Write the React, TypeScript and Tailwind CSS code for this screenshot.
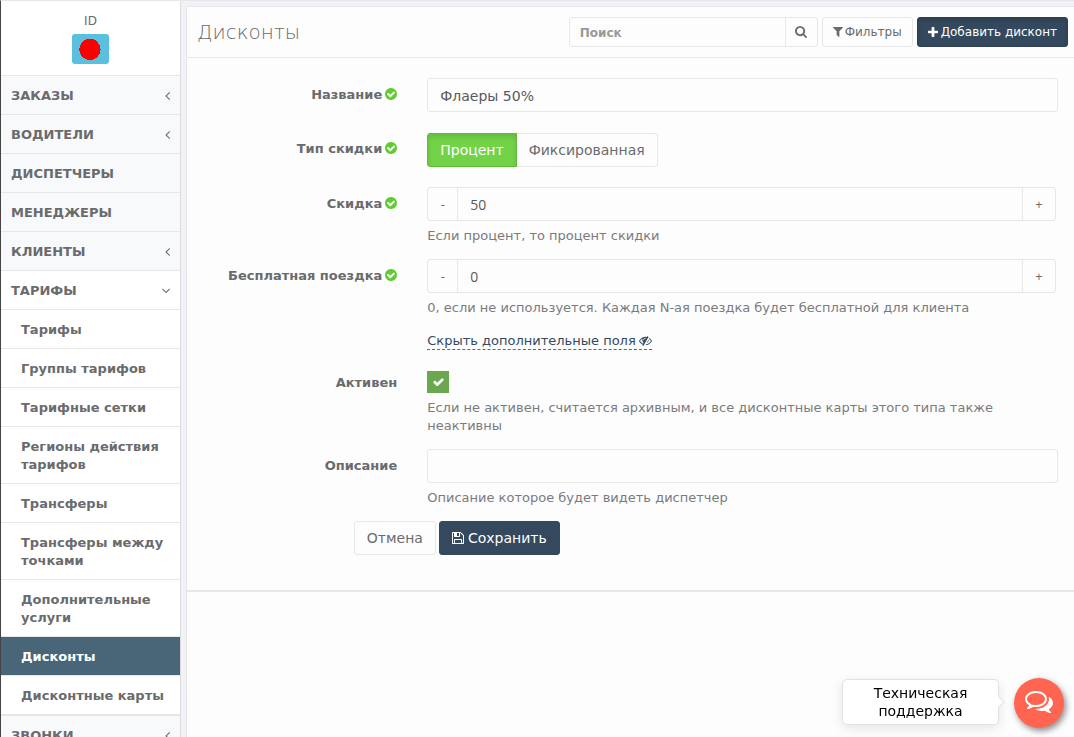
import React, { useState } from 'react';

type IconProps = { d: string; box?: string; className?: string };

const Icon: React.FC<IconProps> = ({ d, box = '128 128 1536 1536', className }) => (
  <svg viewBox={box} fill="currentColor" className={className} aria-hidden="true">
    <path d={d} />
  </svg>
);

const paths = {
  checkCircle:
    'M1412 734q0-28-18-46l-91-90q-19-19-45-19t-45 19l-408 407-226-226q-19-19-45-19t-45 19l-91 90q-18 18-18 46 0 27 18 45l362 362q19 19 45 19 27 0 46-19l543-543q18-18 18-45zm252 162q0 209-103 385.5t-279.5 279.5-385.5 103-385.5-103-279.5-279.5-103-385.5 103-385.5 279.5-279.5 385.5-103 385.5 103 279.5 279.5 103 385.5z',
  search:
    'M1216 832q0-185-131.5-316.5t-316.5-131.5-316.5 131.5-131.5 316.5 131.5 316.5 316.5 131.5 316.5-131.5 131.5-316.5zm512 832q0 52-38 90t-90 38q-54 0-90-38l-343-342q-179 124-399 124-143 0-273.5-55.5t-225-150-150-225-55.5-273.5 55.5-273.5 150-225 225-150 273.5-55.5 273.5 55.5 225 150 150 225 55.5 273.5q0 220-124 399l343 343q37 37 37 90z',
  filter:
    'M1595 295q17 41-14 70l-493 493v742q0 42-39 59-13 5-25 5-27 0-45-19l-256-256q-19-19-19-45v-486l-493-493q-31-29-14-70 17-39 59-39h1280q42 0 59 39z',
  plus: 'M1600 736v192q0 40-28 68t-68 28h-416v416q0 40-28 68t-68 28h-192q-40 0-68-28t-28-68v-416h-416q-40 0-68-28t-28-68v-192q0-40 28-68t68-28h416v-416q0-40 28-68t68-28h192q40 0 68 28t28 68v416h416q40 0 68 28t28 68z',
  floppy:
    'M512 1536h768v-384h-768v384zm896 0h128v-896q0-14-10-38.5t-20-34.5l-281-281q-10-10-34-20t-39-10v416q0 40-28 68t-68 28h-576q-40 0-68-28t-28-68v-416h-128v1280h128v-416q0-40 28-68t68-28h832q40 0 68 28t28 68v416zm-384-928v-320q0-13-9.5-22.5t-22.5-9.5h-192q-13 0-22.5 9.5t-9.5 22.5v320q0 13 9.5 22.5t22.5 9.5h192q13 0 22.5-9.5t9.5-22.5zm640 32v928q0 40-28 68t-68 28h-1344q-40 0-68-28t-28-68v-1344q0-40 28-68t68-28h928q40 0 88 20t76 48l280 280q28 28 48 76t20 88z',
  check:
    'M1671 566q0 40-28 68l-724 724-136 136q-28 28-68 28t-68-28l-136-136-362-362q-28-28-28-68t28-68l136-136q28-28 68-28t68 28l294 295 656-657q28-28 68-28t68 28l136 136q28 28 28 68z',
  angleLeft:
    'M1203 544q0 13-10 23l-393 393 393 393q10 10 10 23t-10 23l-50 50q-10 10-23 10t-23-10l-466-466q-10-10-10-23t10-23l466-466q10-10 23-10t23 10l50 50q10 10 10 23z',
  angleDown:
    'M1395 736q0 13-10 23l-466 466q-10 10-23 10t-23-10l-466-466q-10-10-10-23t10-23l50-50q10-10 23-10t23 10l393 393 393-393q10-10 23-10t23 10l50 50q10 10 10 23z',
  comments:
    'M704 384q-153 0-286 52t-211.5 141-78.5 191q0 82 53 158t149 132l97 56-35 84q34-20 62-39l44-31 53 10q78 14 153 14 153 0 286-52t211.5-141 78.5-191-78.5-191-211.5-141-286-52zm0-128q191 0 353.5 68.5t256.5 186.5 94 257-94 257-256.5 186.5-353.5 68.5q-86 0-176-16-124 88-278 128-36 9-86 16h-3q-11 0-20.5-8t-11.5-21q-1-3-1-6.5t.5-6.5 2-6l2.5-5 3.5-5.5 4-5 4.5-5 4-4.5q5-6 23-25t26-29.5 22.5-29 25-38.5 20.5-44q-124-72-195-177t-71-224q0-139 94-257t256.5-186.5 353.5-68.5zm822 1169q10 24 20.5 44t25 38.5 22.5 29 26 29.5 23 25q1 1 4 4.5t4.5 5 4 5 3.5 5.5l2.5 5 2 6 .5 6.5-1 6.5q-3 14-13 22t-22 7q-50-7-86-16-154-40-278-128-90 16-176 16-271 0-472-132 58 4 88 4 161 0 309-45t264-129q125-92 192-212t67-254q0-77-23-152 129 71 204 178t75 230q0 120-71 224.5t-195 176.5z',
  eyeSlash:
    'M555 1335l78-141q-87-63-136-159t-49-203q0-121 61-225-229 117-381 353 167 258 427 375zm389-759q0-20-14-34t-34-14q-125 0-214.5 89.5t-89.5 214.5q0 20 14 34t34 14 34-14 14-34q0-86 61-147t147-61q20 0 34-14t14-34zm363-191q0 7-1 9-105 188-315 566t-316 567l-49 89q-10 16-28 16-12 0-134-70-16-10-16-28 0-12 44-87-143-65-263.5-173t-208.5-245q-20-31-20-69t20-69q153-235 380-371t496-136q89 0 180 17l54-97q10-16 28-16 5 0 18 6t31 15.5 33 18.5 31.5 18.5 19.5 11.5q16 10 16 27zm37 447q0 139-79 253.5t-209 164.5l280-502q8 45 8 84zm448 128q0 35-20 69-39 64-109 145-150 172-347.5 267t-419.5 95l74-132q212-18 392.5-137t301.5-307q-115-179-282-294l63-112q95 64 182.5 153t144.5 184q20 34 20 69z',
};

const topMenu = [
  { title: 'Заказы', nested: true },
  { title: 'Водители', nested: true },
  { title: 'Диспетчеры', nested: false },
  { title: 'Менеджеры', nested: false },
  { title: 'Клиенты', nested: true },
];

const tariffMenu = [
  'Тарифы',
  'Группы тарифов',
  'Тарифные сетки',
  'Регионы действия тарифов',
  'Трансферы',
  'Трансферы между точками',
  'Дополнительные услуги',
  'Дисконты',
  'Дисконтные карты',
];

const MenuLink: React.FC<{ title: string; nested?: boolean; open?: boolean }> = ({ title, nested, open }) => (
  <a
    href="#"
    className={`flex items-center justify-between border-b border-[#e7e7e7] px-2.5 pt-[11px] pb-[9px] text-[13px] leading-[18px] font-bold uppercase ${open ? 'bg-white' : 'bg-[#f8f9fb]'}`}
  >
    {title}
    {open && <Icon d={paths.angleDown} box="384 448 1024 1024" className="h-2 w-2" />}
    {nested && <Icon d={paths.angleLeft} box="563 448 640 1024" className="h-2 w-[5px]" />}
  </a>
);

const Sidebar: React.FC = () => (
  <aside className="w-[180px] shrink-0 border-r border-[#dcdcdc] bg-white">
    <div className="flex h-[75px] flex-col items-center border-b border-[#e7e7e7] pt-[11px] text-[12px] leading-[18px]">
      ID
      <button type="button" aria-label="ID" className="mt-1 flex h-[30px] w-[37px] items-center justify-center rounded-[3px] bg-[#5bc0de]">
        <svg viewBox="0 0 24 24" className="mr-0.5 h-6 w-6" shapeRendering="crispEdges">
          <circle cx="12" cy="12.5" r="10.6" fill="#f00" />
        </svg>
      </button>
    </div>
    <nav>
      {topMenu.map((item) => (
        <MenuLink key={item.title} {...item} />
      ))}
      <MenuLink title="Тарифы" open />
      <ul className="border-b border-[#e7e7e7]">
        {tariffMenu.map((title) => (
          <li key={title}>
            <a
              href="#"
              className={`block border-b border-[#e7e7e7] pt-[11px] pr-2.5 pb-[9px] pl-5 text-[13px] leading-[18px] font-bold ${title === 'Дисконты' ? 'bg-[#486677] text-white' : ''}`}
            >
              {title}
            </a>
          </li>
        ))}
      </ul>
      <MenuLink title="Звонки" nested />
    </nav>
  </aside>
);

type FieldProps = {
  label: string;
  id: string;
  valid?: boolean;
  help?: string;
  className?: string;
  labelClass?: string;
  children: React.ReactNode;
};

const Field: React.FC<FieldProps> = ({ label, id, valid, help, className = 'mb-3.5', labelClass = 'pt-2', children }) => (
  <div className={`grid grid-cols-4 ${className}`}>
    <label htmlFor={id} className={`flex items-center justify-end gap-[3px] self-start px-[15px] text-[13px] leading-[18px] font-bold ${labelClass}`}>
      {label}
      {valid && <Icon d={paths.checkCircle} className="mb-0.5 h-3 w-3 text-[#60cc30]" />}
    </label>
    <div className="col-span-3 px-[15px]">
      {children}
      {help && <p className="mt-1.5 text-[13px] leading-[18px] text-[#7a7b7d]">{help}</p>}
    </div>
  </div>
);

const Stepper: React.FC<{ id: string; initial: number }> = ({ id, initial }) => {
  const [value, setValue] = useState(initial);
  return (
    <div className="mr-0.5 flex h-[34px] rounded-[3px] border border-[#e7e7e7] font-['Open_Sans',sans-serif]">
      <button type="button" onClick={() => setValue(value - 1)} className="w-[30px] border-r border-[#e7e7e7] text-[13px]">
        -
      </button>
      <input
        id={id}
        value={value}
        inputMode="numeric"
        onChange={(e) => setValue(Number(e.target.value) || 0)}
        className="min-w-0 flex-1 px-3 pt-0.5 text-sm text-[#58595b] outline-none"
      />
      <button type="button" onClick={() => setValue(value + 1)} className="w-[33px] border-l border-[#e7e7e7] text-[13px]">
        +
      </button>
    </div>
  );
};

const App: React.FC = () => {
  const [kind, setKind] = useState('percent');
  const [active, setActive] = useState(true);

  return (
    <div className="flex h-screen overflow-hidden border-t border-l border-t-[#e7e7e7] border-l-[#444] bg-[#f1f2f7] font-['DejaVu_Sans',sans-serif] text-[13px] leading-[18px] text-[#6a6b6d]">
      <Sidebar />
      <main className="ml-[5px] mt-[5px] flex min-w-0 flex-1 flex-col border-t border-l border-[#e7e7e7] bg-[#fdfdfd]">
        <header className="flex h-[51px] items-center border-b border-[#e7e7e7] pr-1.5 pl-2.5">
          <h1 className="flex-1 text-xl font-extralight">Дисконты</h1>
          <form className="flex h-[30px] w-[249px] rounded-[3px] border border-[#e7e7e7]">
            <input
              type="search"
              aria-label="Поиск"
              placeholder="Поиск"
              className="min-w-0 flex-1 px-2.5 pt-0.5 text-xs font-bold outline-none placeholder:text-[#999]"
            />
            <button type="button" aria-label="Найти" className="flex w-8 items-center justify-center border-l border-[#e7e7e7]">
              <Icon d={paths.search} box="64 128 1664 1664" className="h-3 w-3" />
            </button>
          </form>
          <button type="button" className="ml-1 flex h-[30px] items-center gap-0.5 rounded-[3px] border border-[#e7e7e7] px-2.5 text-xs">
            <Icon d={paths.filter} box="192 256 1408 1408" className="h-2.5 w-2.5" />
            Фильтры
          </button>
          <button
            type="button"
            className="ml-1 flex h-[30px] items-center gap-[3px] rounded-[3px] border border-[#2c3e50] bg-[#34495e] px-2.5 text-xs text-white shadow-[inset_0_3px_5px_rgba(0,0,0,0.125)]"
          >
            <Icon d={paths.plus} box="192 128 1408 1408" className="h-2.5 w-2.5" />
            Добавить дисконт
          </button>
        </header>

        <form className="border-b-2 border-[#e7e7e7] pt-5 pr-px pb-[35px] pl-[5px]">
          <Field label="Название" id="name" valid className="mb-[21px]">
            <input id="name" defaultValue="Флаеры 50%" className="block h-[34px] w-full rounded-[3px] border border-[#e7e7e7] px-3 pt-0.5 text-sm text-[#58595b] outline-none" />
          </Field>
          <Field label="Тип скидки" id="percent" valid className="mb-5" labelClass="pt-[7px]">
            <div className="flex h-[34px] text-sm">
              <button
                id="percent"
                type="button"
                onClick={() => setKind('percent')}
                className={`rounded-l-[3px] border px-3 ${kind === 'percent' ? 'border-[#60bb38] bg-[#73d348] text-white shadow-[inset_0_3px_5px_rgba(0,0,0,0.125)]' : 'border-[#e7e7e7]'}`}
              >
                Процент
              </button>
              <button
                type="button"
                onClick={() => setKind('fixed')}
                className={`rounded-r-[3px] border border-l-0 px-3 ${kind === 'fixed' ? 'border-[#60bb38] bg-[#73d348] text-white shadow-[inset_0_3px_5px_rgba(0,0,0,0.125)]' : 'border-[#e7e7e7]'}`}
              >
                Фиксированная
              </button>
            </div>
          </Field>
          <Field label="Скидка" id="discount" valid help="Если процент, то процент скидки">
            <Stepper id="discount" initial={50} />
          </Field>
          <Field label="Бесплатная поездка" id="free-ride" valid help="0, если не используется. Каждая N-ая поездка будет бесплатной для клиента">
            <Stepper id="free-ride" initial={0} />
          </Field>
          <div className="mb-[21px] grid grid-cols-4">
            <div className="col-span-3 col-start-2 flex px-[15px]">
              <a href="#" className="flex items-center gap-[3px] border-b border-dashed border-[#0088cc] pt-px leading-[17px] text-[#34495e]">
                Скрыть дополнительные поля
                <Icon d={paths.eyeSlash} box="0 128 1792 1536" className="h-[11px] w-[13px]" />
              </a>
            </div>
          </div>
          <Field
            label="Активен"
            id="active"
            labelClass="pt-[3px]"
            help="Если не активен, считается архивным, и все дисконтные карты этого типа также неактивны"
          >
            <div className="grid h-[22px] w-[22px]">
              <input
                id="active"
                type="checkbox"
                checked={active}
                onChange={(e) => setActive(e.target.checked)}
                className="col-start-1 row-start-1 h-[22px] w-[22px] appearance-none border border-[#6aa84f] checked:bg-[#6aa84f]"
              />
              {active && <Icon d={paths.check} box="121 298 1550 1188" className="pointer-events-none col-start-1 row-start-1 h-2 w-[11px] place-self-center text-white" />}
            </div>
          </Field>
          <Field label="Описание" id="description" help="Описание которое будет видеть диспетчер">
            <input id="description" className="block h-[34px] w-full rounded-[3px] border border-[#e7e7e7] px-3 text-sm outline-none" />
          </Field>
          <div className="grid grid-cols-12">
            <div className="col-span-10 col-start-3 flex gap-[3px] px-[15px] text-sm">
              <button type="button" className="h-[34px] rounded-[3px] border border-[#e7e7e7] px-3">
                Отмена
              </button>
              <button type="button" className="flex h-[34px] items-center gap-1 rounded-[3px] border border-[#34495e] bg-[#34495e] px-3 text-white">
                <Icon d={paths.floppy} className="h-3 w-3" />
                Сохранить
              </button>
            </div>
          </div>
        </form>
      </main>

      {/* support chat launcher */}
      <div className="fixed right-2.5 bottom-[9px] flex items-center gap-[15px]">
        <div className="relative mb-0.5 w-[157px] rounded-[5px] border border-[#e2e2e2] bg-white px-5 py-1 text-center text-sm leading-[18px] text-black shadow-[0_3px_12px_rgba(0,0,0,0.1)]">
          Техническая поддержка
          <span className="absolute top-1/2 -right-[5px] h-2 w-2 -translate-y-1/2 rotate-45 border-t border-r border-[#e2e2e2] bg-white" />
        </div>
        <button type="button" aria-label="Чат" className="flex h-[50px] w-[50px] items-center justify-center rounded-full bg-[#ff6550] pb-0.5 text-white shadow-[2px_3px_6px_rgba(0,0,0,0.45)]">
          <Icon d={paths.comments} box="0 256 1792 1408" className="h-[22px] w-7" />
        </button>
      </div>
    </div>
  );
};

export default App;
